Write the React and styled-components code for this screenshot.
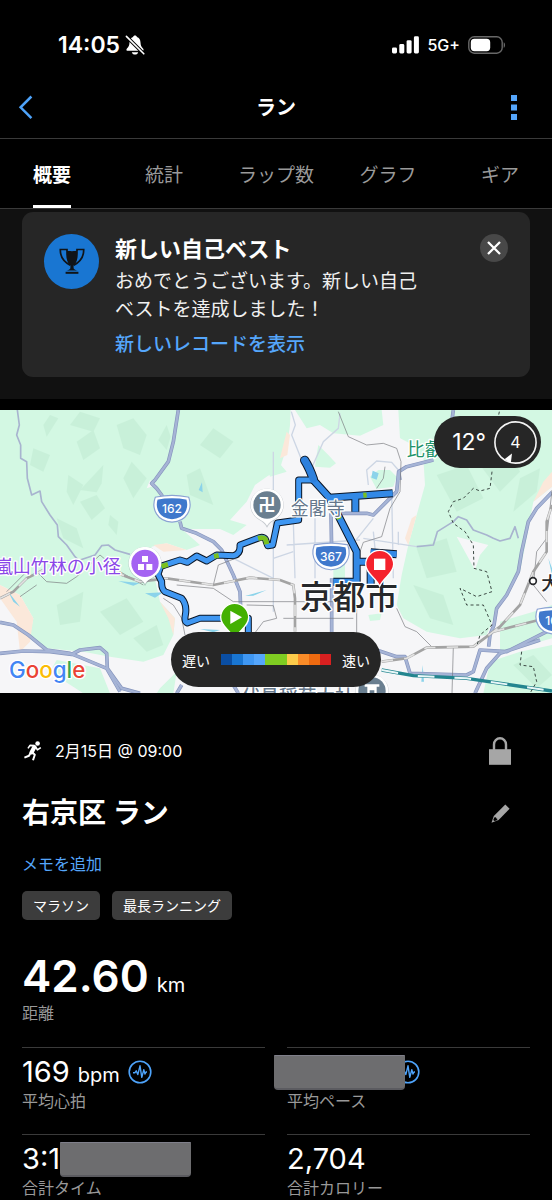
import React, { useState } from "react";
import styled, { createGlobalStyle } from "styled-components";

const GlobalStyle = createGlobalStyle`
    html {
        scrollbar-width: none;
        background: #000;
    }

    body {
        margin: 0;
        background: #000;
        color: #fff;
        font-family: Inter, "Noto Sans CJK JP", sans-serif;
    }

    *, *::before, *::after {
        box-sizing: border-box;
    }

    button {
        font: inherit;
        color: inherit;
        background: none;
        border: 0;
        padding: 0;
        cursor: pointer;
    }

    h1, h2, p, ul, dl, dd {
        margin: 0;
        padding: 0;
    }

    svg {
        display: block;
        flex: none;
    }
`;

const Page = styled.div`
    overflow: hidden;
`;

const StatusBar = styled.div`
    display: flex;
    justify-content: space-between;
    align-items: center;
    height: 76px;
    padding: 14px 46px 0 58px;
`;

const StatusGroup = styled.div`
    display: flex;
    align-items: center;
    gap: ${({ $gap }) => $gap}px;
`;

const Clock = styled.span`
    font-size: 23px;
    font-weight: 600;
`;

const Network = styled.span`
    font-size: 16px;
    font-weight: 500;
`;

const NavBar = styled.header`
    display: grid;
    grid-template-columns: 40px 1fr 40px;
    align-items: center;
    height: 63px;
    padding: 0 18px;
    border-bottom: 1px solid #3a3a3a;
`;

const NavTitle = styled.h1`
    padding-top: 2px;
    text-align: center;
    font-size: 20px;
    font-weight: 700;
    line-height: 28px;
`;

const NavButton = styled.button`
    display: flex;
    justify-content: ${({ $center }) => ($center ? "center" : "flex-start")};
    align-items: center;
    height: 44px;
`;

const Tabs = styled.nav`
    display: grid;
    grid-template-columns: repeat(5, 1fr);
    justify-items: center;
    height: 70px;
    margin: 0 -4px;
    border-bottom: 1px solid #3a3a3a;
`;

const Tab = styled.button`
    font-size: 19px;
    font-weight: ${({ $active }) => ($active ? 700 : 400)};
    color: ${({ $active }) => ($active ? "#fff" : "#9a9a9a")};
    border-top: 2px solid transparent;
    border-bottom: 3px solid ${({ $active }) => ($active ? "#fff" : "transparent")};
`;

const NoticeArea = styled.section`
    background: #111;
    padding: 3px 22px 22px;
    margin-bottom: 11px;
`;

const Notice = styled.div`
    display: flex;
    align-items: flex-start;
    padding: 22px 22px 18px;
    border-radius: 11px;
    background: #262626;
`;

const Badge = styled.div`
    display: grid;
    place-items: center;
    flex: none;
    width: 55px;
    height: 55px;
    margin-right: 16px;
    border-radius: 50%;
    background: #1976d2;
`;

const NoticeText = styled.div`
    flex: 1;
    margin-right: 48px;
    font-size: 19px;
    line-height: 28px;

    h2 {
        font-size: 22px;
        font-weight: 700;
        line-height: 30px;
        margin-bottom: 4px;
    }

    p {
        color: #f0f0f0;
    }

    a {
        display: block;
        margin-top: 7px;
        color: #55a6fb;
        font-weight: 500;
        text-decoration: none;
    }
`;

const CloseButton = styled.button`
    display: grid;
    place-items: center;
    width: 28px;
    height: 28px;
    border-radius: 50%;
    background: #484848;
`;

const MapBox = styled.section`
    position: relative;
    aspect-ratio: 552 / 283;
    overflow: hidden;

    > svg {
        width: 100%;
        height: 100%;
    }
`;

const Weather = styled.div`
    position: absolute;
    top: 6px;
    right: 11px;
    display: flex;
    align-items: center;
    gap: 8px;
    height: 52px;
    padding: 0 4px 0 18px;
    border-radius: 26px;
    background: #262626;
    font-size: 23px;
`;

const Legend = styled.div`
    position: absolute;
    bottom: 6px;
    left: 50%;
    transform: translateX(-50%);
    display: flex;
    align-items: center;
    gap: 11px;
    height: 55px;
    padding: 0 11px;
    border-radius: 28px;
    background: #262626;
    font-size: 14px;
    white-space: nowrap;
`;

const Scale = styled.div`
    display: flex;
`;

const Swatch = styled.span`
    width: 11px;
    height: 11px;
    background: ${({ $color }) => $color};
`;

const Details = styled.main`
    padding: 44px 22px 0;
`;

const Row = styled.div`
    display: flex;
    justify-content: space-between;
    align-items: center;
`;

const DateLine = styled.div`
    display: flex;
    align-items: center;
    gap: 12px;
    font-size: 16px;
    line-height: 28px;
    padding-left: 2px;
`;

const IconButton = styled.button`
    display: grid;
    place-items: center;
    width: 22px;
    height: 28px;
    margin-right: 19px;
    color: #a6a6a6;
`;

const TitleRow = styled(Row)`
    margin-top: 30px;
`;

const ActivityTitle = styled.h2`
    font-size: 28px;
    font-weight: 700;
    line-height: 36px;
`;

const MemoLink = styled.a`
    display: inline-block;
    margin-top: 21px;
    font-size: 16px;
    line-height: 24px;
    color: #55a6fb;
    text-decoration: none;
`;

const TagList = styled.ul`
    display: flex;
    gap: 12px;
    margin-top: 15px;
    list-style: none;
`;

const Tag = styled.li`
    padding: 0 11px;
    border-radius: 5px;
    background: #3c3c3c;
    font-size: 14px;
    line-height: 29px;
`;

const Distance = styled.dl`
    display: flex;
    flex-direction: column-reverse;
    margin: 32px 0 22px;

    dd {
        font-size: 44px;
        font-weight: 600;
        line-height: 48px;
    }
`;

const Label = styled.dt`
    font-size: 16px;
    line-height: 24px;
    margin-top: 1px;
    color: #999;
`;

const Unit = styled.span`
    font-size: 20px;
    font-weight: 400;
    line-height: 1;
    margin-left: 8px;
`;

const Stats = styled.dl`
    display: grid;
    grid-template-columns: 1fr 1fr;
    column-gap: 22px;
`;

const Stat = styled.div`
    display: flex;
    flex-direction: column-reverse;
    padding: 8px 0 21px;
    border-top: 1px solid #3a3a3a;
`;

const StatValue = styled.dd`
    display: flex;
    align-items: center;
    height: 32px;
    font-size: 29px;
    line-height: 32px;
    white-space: nowrap;
`;

const Mask = styled.span`
    position: relative;
    z-index: 1;
    width: 131px;
    height: 35px;
    margin-left: ${({ $bleed }) => ($bleed ? "-13px" : 0)};
    margin-right: -9px;
    border-radius: 1px 1px 4px 4px;
    border-top: 1px solid #7f7f8a;
    border-bottom: 2px solid #5b5b60;
    background: #6d6d6f;
`;

const PulseWrap = styled.span`
    margin-left: 8px;
`;

const BellOff = () => (
    <svg width="20" height="20" viewBox="0 0 20 20">
        <path d="M10 0.5C9 0.5 8.3 1.1 8.1 1.9C5.7 2.7 4.6 4.7 4.5 7.4C4.4 10.5 3.6 11.8 2 13.4C1 14.5 1.3 15.8 2.7 15.8H17.3C18.7 15.8 19 14.5 18 13.4C16.4 11.8 15.6 10.5 15.5 7.4C15.4 4.7 14.3 2.7 11.9 1.9C11.7 1.1 11 0.5 10 0.5Z" fill="#fff" />
        <path d="M6.8 17.2H13.2C12.8 18.7 11.6 19.5 10 19.5S7.2 18.7 6.8 17.2Z" fill="#fff" />
        <path d="M0.6 0.6L19.4 19.4" stroke="#000" strokeWidth="3.6" />
        <path d="M1.4 1.4L18.8 18.8" stroke="#fff" strokeWidth="1.6" strokeLinecap="round" />
    </svg>
);

const Signal = () => (
    <svg width="27" height="18" viewBox="0 0 27 18" fill="#fff">
        <rect x="0" y="11.5" width="5" height="6" rx="1.4" />
        <rect x="7.3" y="8" width="5" height="9.5" rx="1.4" />
        <rect x="14.6" y="4.2" width="5" height="13.3" rx="1.4" />
        <rect x="21.9" y="0.3" width="5" height="17.2" rx="1.4" />
    </svg>
);

const Battery = () => (
    <svg width="38" height="18" viewBox="0 0 38 18">
        <rect x="0.8" y="0.8" width="33.4" height="16.4" rx="5.4" fill="none" stroke="#686868" strokeWidth="1.4" />
        <rect x="2.8" y="2.8" width="19.4" height="12.4" rx="3.6" fill="#fff" />
        <path d="M35.7 6.2C37.5 7 37.5 11 35.7 11.8Z" fill="#686868" />
    </svg>
);

const BackIcon = () => (
    <svg width="15" height="25" viewBox="0 0 15 25">
        <path d="M13.4 1.5L2.6 12.3L13.4 23.2" fill="none" stroke="#4ea3fa" strokeWidth="2.5" />
    </svg>
);

const MoreIcon = () => (
    <svg width="6" height="25" viewBox="0 0 6 25" fill="#55a6fb">
        <rect width="6" height="6" y="0" />
        <rect width="6" height="6" y="9.5" />
        <rect width="6" height="6" y="19" />
    </svg>
);

const Trophy = () => (
    <svg width="26" height="27" viewBox="0 0 26 27">
        <path d="M7.2 2.6C9.5 3.3 16.5 3.3 18.8 2.6C19 9.5 18.2 14.6 14.6 17.6V20.2C14.8 21.6 17 21.8 18.6 22.6H7.4C9 21.8 11.2 21.6 11.4 20.2V17.6C7.8 14.6 7 9.5 7.2 2.6Z" fill="#101418" />
        <path d="M8 3V1.5H1.3C1.1 8.4 4 13.4 11.2 17.2M18 3V1.5H24.7C24.9 8.4 22 13.4 14.8 17.2" fill="none" stroke="#101418" strokeWidth="1.7" />
        <rect x="6.6" y="23.8" width="12.8" height="2" fill="#101418" />
    </svg>
);

const CloseIcon = () => (
    <svg width="14" height="14" viewBox="0 0 14 14">
        <path d="M1 1L13 13M13 1L1 13" stroke="#fff" strokeWidth="2.3" />
    </svg>
);

const Runner = () => (
    <svg width="19" height="20" viewBox="0 0 19 20">
        <circle cx="13.6" cy="2.5" r="2.3" fill="#fff" />
        <path d="M10.4 6L7.6 11.4" stroke="#fff" strokeWidth="4.2" strokeLinecap="round" />
        <path d="M10.2 4.6L6 4.4L4 7.4M11.8 6.2L13.4 8.8L16.8 6.6" fill="none" stroke="#fff" strokeWidth="1.6" strokeLinejoin="round" />
        <path d="M7 11L5 14.8L0.4 16.6M8.4 11.4L10.8 13.8L9 19.2" fill="none" stroke="#fff" strokeWidth="2" strokeLinejoin="round" />
    </svg>
);

const Lock = () => (
    <svg width="22" height="28" viewBox="0 0 22 28">
        <path d="M5 13V7.5A6 6.2 0 0 1 17 7.5V13" fill="none" stroke="#a6a6a6" strokeWidth="2.4" />
        <rect x="0" y="12.2" width="22" height="15.6" fill="#a6a6a6" />
    </svg>
);

const Pencil = () => (
    <svg width="19" height="19" viewBox="0 0 19 19">
        <path d="M14.3 0.4L18.6 4.7L7.6 15.9L0.5 18.7L2.8 12Z" fill="#a6a6a6" />
        <path d="M3.2 13.4L5 13.2L5.4 14.6L6.6 15L5.4 16.4L3.4 17L2.3 15.9Z" fill="#000" />
    </svg>
);

const Pulse = () => (
    <svg width="24" height="24" viewBox="0 0 24 24" fill="none" stroke="#4ea3fa">
        <circle cx="12" cy="12" r="10.8" strokeWidth="1.6" />
        <path d="M5 12.8H6.8L8.2 10.8L9.8 14.6L12 5.8L13.8 17.4L15.8 9.6L17 14L18 12H19" strokeWidth="1.4" strokeLinejoin="round" />
    </svg>
);

const Compass = () => (
    <svg width="43" height="43" viewBox="0 0 43 43">
        <circle cx="21.5" cy="21.5" r="20.6" fill="none" stroke="#f4f4f4" strokeWidth="1.6" />
        <path d="M10.5 38.2L18 32.5L16.8 42Z" fill="#fff" />
        <text x="21.5" y="27" textAnchor="middle" fontSize="16" fill="#fff">4</text>
    </svg>
);

const shieldPath = "M-46 -31Q0 -40 46 -31Q54 -8 42 12Q30 32 0 34Q-30 32 -42 12Q-54 -8 -46 -31Z";

const Shield = ({ x, y, label }) => (
    <g transform={`translate(${x} ${y})`}>
        <path d={shieldPath} fill="none" stroke="#8ba3d3" strokeWidth="14" />
        <path d={shieldPath} fill="#3f78cc" stroke="#fff" strokeWidth="7" />
        <text y="13" textAnchor="middle" fontSize="36" fontWeight="500" fill="#fff">{label}</text>
    </g>
);

// one marker shape for the places, tip points down
const PlaceMarker = ({ x, y, color, children }) => (
    <g transform={`translate(${x} ${y})`}>
        <path d="M0 68C-6 56 -14 50 -24 44A50 50 0 1 1 24 44C14 50 6 56 0 68Z" fill="#6b7580" opacity="0.35" />
        <path d="M0 62C-6 52 -14 48 -24 42A49 49 0 1 1 24 42C14 48 6 52 0 62Z" fill="#fff" />
        <circle r="41" fill={color} />
        {children}
    </g>
);

const RoutePin = ({ x, y, color, children }) => (
    <g transform={`translate(${x} ${y})`}>
        <path d="M0 66C-12 38 -42 28 -42 0A42 42 0 1 1 42 0C42 28 12 38 0 66Z" fill={color} stroke="#fff" strokeWidth="4" />
        {children}
    </g>
);

const facets = [
    "M150 30L130 60L140 95L175 40Z",
    "M240 20L210 60L280 80L300 40Z",
    "M280 75L230 110L250 165L300 130Z",
    "M205 210L250 240L220 300L200 260Z",
    "M310 180L240 255L290 262L305 235Z",
    "M290 270L240 290L275 345L315 310Z",
    "M330 330L355 350L350 390L325 360Z",
    "M500 60L475 105L500 135L512 95Z",
    "M350 60L400 40L440 90L420 150L370 130Z",
    "M100 130L150 150L130 200L90 180Z",
    "M170 340L230 370L250 430L190 400Z",
    "M395 170L440 220L400 280L370 220Z",
    "M640 70L700 110L660 160L600 120Z",
    "M560 210L600 190L640 300L570 270Z",
    "M170 600L250 560L240 650L180 660Z",
    "M300 620L380 580L430 650L360 690Z",
    "M400 700L470 660L490 720L440 740Z",
    "M1310 210L1400 180L1450 280L1370 320Z",
    "M1490 60L1560 200L1500 260L1440 180Z",
    "M1560 220L1620 190L1610 260L1540 320Z",
    "M1250 430L1340 400L1370 500L1280 520Z",
    "M1240 540L1330 570L1360 660L1290 640Z",
    "M1540 780L1600 750L1656 810L1610 850Z",
];

const roads = [
    "M535 15L520 110L505 170L465 225L455 235L470 250L485 270L490 290M540 350L545 370L590 385L640 410L665 435L700 510L720 560L722 610",
    "M0 652L40 660L85 690L140 735L210 745L235 755L320 790L360 860",
    "M0 745L70 738L150 740L215 748L240 735L300 728L320 745L322 790L365 850L420 865",
    "M530 865L545 840M715 865L700 840",
    "M1200 225L1196 200L1220 185L1300 165M1196 200L1190 260L1160 290L1120 330L1100 325L1020 325",
    "M993 325L995 440M995 520L995 690",
    "M1656 262L1610 310L1585 350L1565 440L1555 500L1520 570L1490 610L1482 660L1470 690L1466 725",
    "M1130 735L1190 755L1215 755L1230 805L1400 810L1420 800L1440 735L1520 740L1600 700L1656 672M1425 865L1460 790L1500 745L1620 705",
    "M1360 15L1356 45",
];

const hillRoads = [
    "M52 15L58 60L50 90L62 120L62 160L80 170L82 220L95 270L120 258L125 290L150 330L172 360L175 395L200 420L225 455L240 470",
    "M240 465L285 450L305 422L325 420L345 435L390 448",
    "M1250 425L1300 420L1312 380L1360 350L1375 335L1400 345L1420 375L1460 390L1480 400L1500 408L1530 400L1545 365L1555 400",
];

const streets = [
    "M874 20L886 60L875 90L905 165M1020 25L1015 70L970 110L930 200",
    "M1105 240L1100 195L1130 168L1175 172L1195 195M1175 260L1180 520M880 350L885 520M945 340L945 520M1040 440L1120 340M1195 380L1195 420M1120 380L1130 480M860 420L1080 405M1090 400L1250 425",
    "M820 140L820 620M700 460L820 520M820 460L880 440",
];

const railways = [
    "M0 580L40 560L80 520L130 495M340 500L420 530L500 520L640 540L750 518L840 525L880 540L885 580L885 680",
    "M1145 770L1220 760L1280 728L1420 725L1500 665L1560 600L1600 500L1640 440L1640 350L1656 300M1480 680L1616 645",
];

const blackLines = [
    "M110 500L140 530L200 535L230 515L300 450L360 500L430 540",
    "M1015 20L1045 95L1100 120L1150 115L1190 130L1203 170L1200 260L1170 310L1145 395L1090 412L1080 440",
    "M490 580L520 600L545 640L555 690M530 540L640 550L700 590L1050 590M640 540L655 480L720 455M850 640L1060 640M1070 600L1070 690M740 600L820 602L830 640L790 650L760 690",
    "M1190 610L1215 665L1250 680L1295 725L1360 725L1356 865M1656 255L1640 400L1610 440L1600 540L1640 590",
    "M1155 185L1150 220L1130 250M60 575L110 540M80 500L20 560",
];

const trails = [
    "M1476 200L1470 250L1440 258L1420 250L1390 280L1360 290L1345 320L1360 355L1395 380L1420 420L1422 490L1460 500L1476 560L1430 575L1380 550L1400 600L1450 600L1476 660L1440 690L1430 725",
    "M1565 740L1560 780L1600 785L1610 830L1590 865M1498 20L1490 60",
];

const westRoute = "M745 695L745 640L600 640L562 654Q552 650 556 630Q562 600 545 580L495 560Q484 552 485 530L474 508L482 484L540 465L562 472L590 453L620 468L650 450L700 452Q722 448 720 420L778 398Q796 394 798 408L803 422L818 420L832 354L896 345L896 225L940 225";
const eastRoute = "M940 225L988 278L1178 265M988 278L1014 330L1070 440L1070 530L1000 530M1066 270L1066 320M1070 470L1112 470L1112 540M1112 442L1190 448";
const northSpur = "M914 166Q928 188 940 222";

const ActivityMap = () => (
    <svg viewBox="0 15 1656 849" preserveAspectRatio="xMidYMid slice" role="img" aria-label="ルートマップ">
        <rect y="15" width="1656" height="849" fill="#f6f6f8" />
        <g fill="#d3f8e3">
            <path d="M0 15H872L870 60L862 120L840 190L800 215L765 240L740 290L690 345L740 360L700 390L660 372L545 372L600 420L560 435L500 415L455 425L460 500L480 590L525 640L520 690L490 750L430 770L330 755L250 740L140 730L90 690L100 640L60 570L0 540Z" />
            <path d="M885 15H1145L1150 60L1080 92L1000 85L960 60L920 70Z" />
            <path d="M955 120L985 150L1008 175L990 188L945 185L950 150ZM800 180L830 165L860 200L810 215Z" />
            <path d="M1110 215L1135 195L1170 195L1190 215L1180 245L1130 252Z" />
            <path d="M1195 15H1656V245L1600 290L1580 400L1560 500L1510 580L1480 640L1460 690L1380 700L1280 680L1210 640L1190 600L1205 510L1225 420L1250 330L1275 240L1270 160L1200 100Z" />
            <path d="M1500 650L1600 620L1656 600V700L1500 745ZM1470 770L1560 740L1656 720V865H1450Z" />
            <path d="M170 765L300 790L330 865H250L150 800ZM480 850L530 800L520 865H470Z" />
            <path d="M1000 470H1035V520H1000ZM1105 630L1145 625L1140 645L1110 648Z" />
        </g>
        <g fill="#fbe8da">
            <path d="M0 540L60 570L100 640L90 710L60 740L50 650L0 580Z" />
            <path d="M460 420L500 415L560 435L490 440ZM480 590L525 640L520 690L505 640Z" />
            <path d="M840 160L860 80L870 90L862 150Z" />
            <path d="M1250 330L1225 420L1215 400L1235 340ZM1600 290L1656 245V200L1630 230Z" />
        </g>
        <g fill="#f6f6f8">
            <path d="M1370 395L1465 420L1440 450L1425 495ZM450 225L470 240L440 250Z" />
            <path d="M1620 350L1656 300V590L1600 610L1590 480Z" />
            <path d="M1200 100L1240 120L1275 170L1240 240L1200 260Z" />
        </g>
        <g fill="#a9d9bd" opacity="0.24">
            {facets.map((d) => <path key={d} d={d} />)}
        </g>
        <g fill="#8bd3ea">
            <path d="M596 255L606 232L608 262ZM435 565L490 562L465 578ZM355 528L420 534L400 542ZM1118 197L1136 205L1130 224L1114 218ZM735 573L800 555L760 572ZM1268 780L1272 830L1264 830Z" />
            <path d="M25 560L60 605L40 590ZM600 672L660 675L640 682ZM1645 460L1656 490V510Z" />
        </g>
        <g fill="none" stroke="#cdd6e4" strokeWidth="4">
            {streets.map((d) => <path key={d} d={d} />)}
        </g>
        <g fill="none" stroke="#a8b4cf" strokeWidth="5" strokeLinejoin="round">
            {hillRoads.map((d) => <path key={d} d={d} />)}
        </g>
        <g fill="none" stroke="#8695bd" strokeWidth="11" strokeLinejoin="round">
            {roads.map((d) => <path key={d} d={d} />)}
        </g>
        <g fill="none" stroke="#a6b4d6" strokeWidth="7" strokeLinejoin="round">
            {roads.map((d) => <path key={d} d={d} />)}
        </g>
        <g fill="none" stroke="#77797d" strokeWidth="2">
            {blackLines.map((d) => <path key={d} d={d} />)}
        </g>
        <g fill="none" strokeWidth="8">
            {railways.map((d) => (
                <React.Fragment key={d}>
                    <path d={d} stroke="#a3a3a3" />
                    <path d={d} stroke="#e2e2e2" strokeWidth="5" strokeDasharray="34 34" />
                </React.Fragment>
            ))}
            <path d="M1145 795L1240 812L1400 820L1656 858" stroke="#23858f" strokeWidth="10" />
            <path d="M1145 795L1240 812L1400 820L1656 858" stroke="#e9f7f8" strokeWidth="6" strokeDasharray="50 60" />
        </g>
        <g fill="none" stroke="#3d4a45" strokeWidth="3" strokeDasharray="9 8">
            {trails.map((d) => <path key={d} d={d} />)}
        </g>

        <g fill="none" strokeLinejoin="round">
            <path d={westRoute} stroke="#0b1626" strokeWidth="21" />
            <path d={eastRoute} stroke="#0b1626" strokeWidth="24" />
            <path d={northSpur} stroke="#0b1626" strokeWidth="28" strokeLinecap="round" />
            <path d={westRoute} stroke="#3f97f2" strokeWidth="15" />
            <path d={eastRoute} stroke="#3389e6" strokeWidth="18" />
            <path d={northSpur} stroke="#2d80dc" strokeWidth="22" strokeLinecap="round" />
            <path d="M484 484L504 478M642 454L656 451M774 400Q796 394 798 408L800 418M1090 271L1100 270M1012 330L1018 342" stroke="#7ac01f" strokeWidth="15" />
        </g>

        <Shield x={516} y={312} label="162" />
        <Shield x={993} y={455} label="367" />
        <Shield x={1662} y={648} label="161" />

        <g paintOrder="stroke" stroke="#fff" strokeWidth="8" strokeLinejoin="round">
            <text x="362" y="505" textAnchor="end" fontSize="54" fill="#8a46e8">嵐山竹林の小径</text>
            <text x="872" y="330" fontSize="54" fill="#66788c">金閣寺</text>
            <text x="1220" y="152" fontSize="54" fill="#21936a">比叡山</text>
            <text x="900" y="612" fontSize="98" fontWeight="500" fill="#26282b">京都市</text>
            <text x="1624" y="555" fontSize="54" fontWeight="500" fill="#26282b">大津市</text>
            <text x="725" y="893" fontSize="56" fontWeight="500" fill="#66788c">伏見稲荷大社</text>
        </g>
        <circle cx="1599" cy="528" r="10" fill="#fff" stroke="#26282b" strokeWidth="5" />

        <PlaceMarker x={435} y={475} color="#a463f2">
            <path d="M-9 -22H9V-4H-9ZM-21 2H-3V20H-21ZM4 2H22V20H4Z" fill="#fff" />
        </PlaceMarker>
        <PlaceMarker x={801} y={300} color="#6a7f90">
            <text y="19" textAnchor="middle" fontSize="52" fontWeight="700" fill="#fff">卍</text>
        </PlaceMarker>
        <PlaceMarker x={1116} y={858} color="#6a7f90">
            <path d="M-22 -20H22V-13H14V20H7V-2H-7V20H-14V-13H-22Z" fill="#fff" />
        </PlaceMarker>
        <RoutePin x={704} y={637} color="#43b002">
            <path d="M-13 -20L22 0L-13 20Z" fill="#fff" />
        </RoutePin>
        <RoutePin x={1139} y={478} color="#f5222d">
            <rect x="-17" y="-17" width="34" height="34" fill="#fff" />
        </RoutePin>

        <text x="27" y="818" fontSize="67" fontWeight="500" paintOrder="stroke" stroke="#fff" strokeWidth="8" strokeLinejoin="round">
            <tspan fill="#4285f4">G</tspan>
            <tspan fill="#ea4335">o</tspan>
            <tspan fill="#fbbc05">o</tspan>
            <tspan fill="#4285f4">g</tspan>
            <tspan fill="#34a853">l</tspan>
            <tspan fill="#ea4335">e</tspan>
        </text>
    </svg>
);

const tabs = ["概要", "統計", "ラップ数", "グラフ", "ギア"];

const paceColors = [
    "#0a4ea3", "#1976d2", "#3f97f2", "#55a6fb", "#7fcc22",
    "#7fcc22", "#fccb4a", "#fa8c28", "#ee6a10", "#d82020",
];

const App = () => {
    const [activeTab, setActiveTab] = useState(tabs[0]);
    const [showNotice, setShowNotice] = useState(true);

    return (
        <Page>
            <GlobalStyle />
            <StatusBar>
                <StatusGroup $gap={5}>
                    <Clock>14:05</Clock>
                    <BellOff />
                </StatusGroup>
                <StatusGroup $gap={8}>
                    <Signal />
                    <Network>5G+</Network>
                    <Battery />
                </StatusGroup>
            </StatusBar>

            <NavBar>
                <NavButton aria-label="戻る">
                    <BackIcon />
                </NavButton>
                <NavTitle>ラン</NavTitle>
                <NavButton $center aria-label="メニュー">
                    <MoreIcon />
                </NavButton>
            </NavBar>

            <Tabs>
                {tabs.map((tab) => (
                    <Tab key={tab} $active={tab === activeTab} onClick={() => setActiveTab(tab)}>
                        {tab}
                    </Tab>
                ))}
            </Tabs>

            {showNotice && (
                <NoticeArea>
                    <Notice>
                        <Badge>
                            <Trophy />
                        </Badge>
                        <NoticeText>
                            <h2>新しい自己ベスト</h2>
                            <p>おめでとうございます。新しい自己ベストを達成しました！</p>
                            <a href="#records">新しいレコードを表示</a>
                        </NoticeText>
                        <CloseButton aria-label="閉じる" onClick={() => setShowNotice(false)}>
                            <CloseIcon />
                        </CloseButton>
                    </Notice>
                </NoticeArea>
            )}

            <MapBox>
                <ActivityMap />
                <Weather>
                    12°
                    <Compass />
                </Weather>
                <Legend>
                    遅い
                    <Scale>
                        {paceColors.map((color, i) => (
                            <Swatch key={i} $color={color} />
                        ))}
                    </Scale>
                    速い
                </Legend>
            </MapBox>

            <Details>
                <Row>
                    <DateLine>
                        <Runner />
                        2月15日 @ 09:00
                    </DateLine>
                    <IconButton aria-label="公開設定">
                        <Lock />
                    </IconButton>
                </Row>
                <TitleRow>
                    <ActivityTitle>右京区 ラン</ActivityTitle>
                    <IconButton aria-label="編集">
                        <Pencil />
                    </IconButton>
                </TitleRow>
                <MemoLink href="#memo">メモを追加</MemoLink>
                <TagList>
                    <Tag>マラソン</Tag>
                    <Tag>最長ランニング</Tag>
                </TagList>

                <Distance>
                    <Label>距離</Label>
                    <dd>
                        42.60<Unit>km</Unit>
                    </dd>
                </Distance>

                <Stats>
                    <Stat>
                        <Label>平均心拍</Label>
                        <StatValue>
                            <span>
                                169<Unit>bpm</Unit>
                            </span>
                            <PulseWrap>
                                <Pulse />
                            </PulseWrap>
                        </StatValue>
                    </Stat>
                    <Stat>
                        <Label>平均ペース</Label>
                        <StatValue>
                            <Mask $bleed />
                            <Pulse />
                        </StatValue>
                    </Stat>
                    <Stat>
                        <Label>合計タイム</Label>
                        <StatValue>
                            3:1
                            <Mask />
                        </StatValue>
                    </Stat>
                    <Stat>
                        <Label>合計カロリー</Label>
                        <StatValue>2,704</StatValue>
                    </Stat>
                </Stats>
            </Details>
        </Page>
    );
};

export default App;
